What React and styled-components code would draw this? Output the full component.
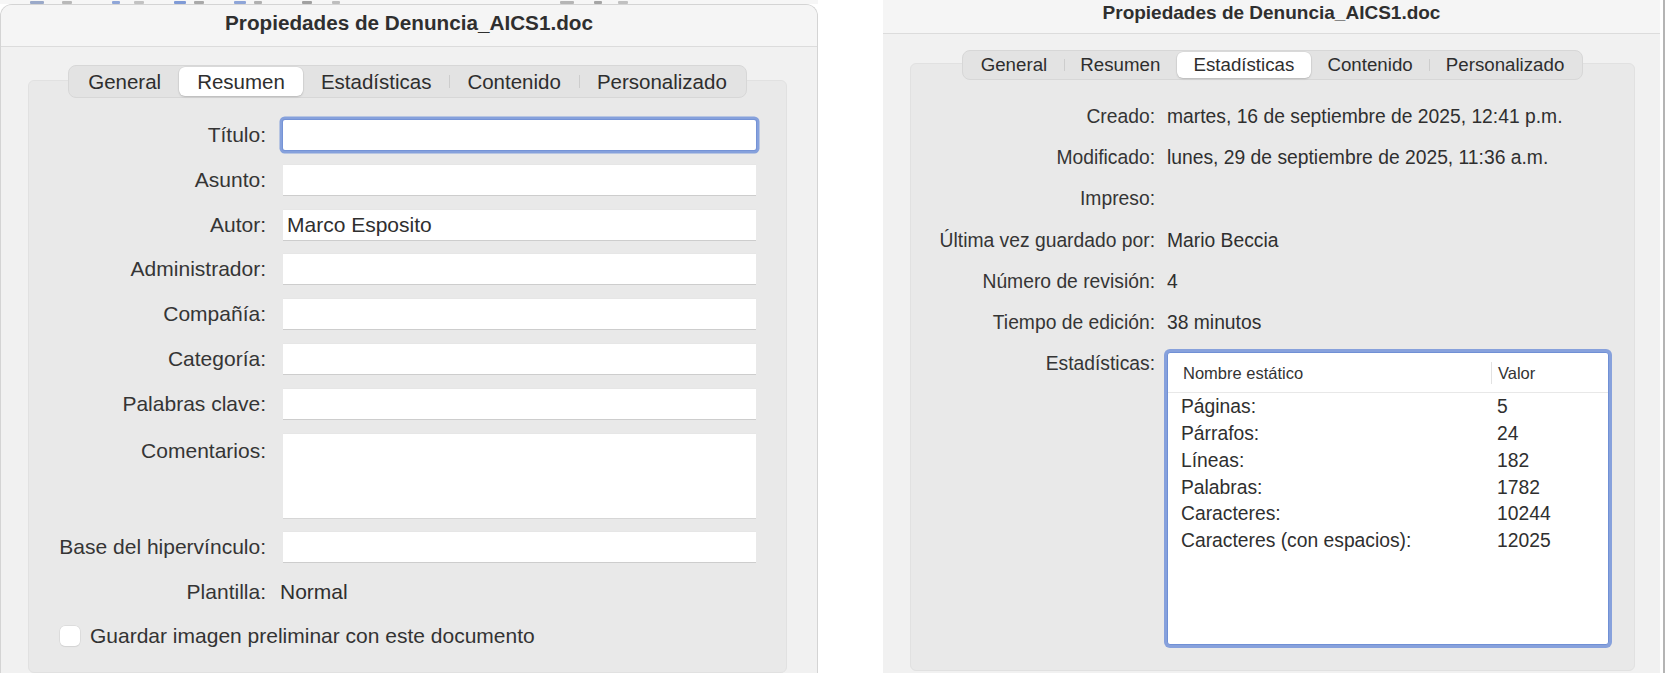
import React from "react";
import styled, { createGlobalStyle } from "styled-components";

const GlobalStyle = createGlobalStyle`
  *, *::before, *::after {
    box-sizing: border-box;
  }
  html, body {
    margin: 0;
    padding: 0;
    background: #ffffff;
  }
  body {
    font-family: "Liberation Sans", Arial, sans-serif;
    color: #333333;
  }
`;

const Screen = styled.div`
  width: 1668px;
  height: 673px;
  overflow: hidden;
  display: flex;
  align-items: stretch;
`;

const LeftColumn = styled.div`
  width: 818px;
  flex-shrink: 0;
  display: flex;
  flex-direction: column;
`;

/* the toolbar of the document window that peeks out above the dialog */
const ToolbarPeek = styled.div`
  height: 4px;
  flex-shrink: 0;
  display: flex;
  align-items: flex-end;
  background: #f6f6f6;
  overflow: hidden;
`;

const PeekMark = styled.span`
  width: ${(p) => p.$w}px;
  height: 3px;
  margin-left: ${(p) => p.$ml}px;
  border-radius: 1px;
  background: ${(p) => p.$color};
`;

const Window = styled.div`
  flex: 1;
  display: flex;
  flex-direction: column;
  background: #f1f1f1;
  border: ${(p) => (p.$bordered ? "1px solid #d4d4d4" : "none")};
  border-bottom: none;
  border-radius: ${(p) => p.$radius || "0"};
  overflow: hidden;
`;

const RightWindow = styled(Window)`
  flex: 0 0 777px;
  margin-left: 65px;
`;

const EdgePeek = styled.div`
  width: 2px;
  margin-left: 3px;
  background: #b4b4b4;
`;

const TitleBar = styled.div`
  height: ${(p) => p.$h}px;
  flex-shrink: 0;
  display: flex;
  align-items: center;
  justify-content: center;
  padding-bottom: ${(p) => p.$pb}px;
  background: #f5f5f5;
  border-bottom: 1px solid #dcdcdc;
  font-size: ${(p) => p.$fs}px;
  font-weight: bold;
  color: #2f2f2f;
`;

const WindowBody = styled.div`
  flex: 1;
  display: flex;
  flex-direction: column;
  padding: ${(p) => p.$pad};
`;

const TabBar = styled.div`
  align-self: center;
  position: relative;
  z-index: 1;
  display: flex;
  height: ${(p) => p.$h}px;
  padding: 1px;
  background: #e3e3e3;
  border: 1px solid #d7d7d7;
  border-radius: 8px;
`;

const Tab = styled.div`
  position: relative;
  display: flex;
  align-items: center;
  padding: 0 ${(p) => p.$px}px;
  font-size: ${(p) => p.$fs}px;
  color: #2e2e2e;
  white-space: nowrap;
  border-radius: 6px;
  background: ${(p) => (p.$active ? "#ffffff" : "transparent")};
  box-shadow: ${(p) =>
    p.$active ? "0 1px 2px rgba(0,0,0,0.16), 0 0 0 0.5px rgba(0,0,0,0.07)" : "none"};

  &::before {
    content: "";
    display: ${(p) => (p.$sep ? "block" : "none")};
    position: absolute;
    left: 0;
    top: 28%;
    bottom: 28%;
    width: 1px;
    background: #cdcdcd;
  }
`;

const Panel = styled.div`
  flex: 1;
  margin-top: -${(p) => p.$overlap}px;
  padding: ${(p) => p.$pad};
  background: #e9e9e9;
  border: 1px solid #e1e1e1;
  border-radius: 6px;
`;

/* ---- Resumen tab ---- */

const SummaryForm = styled.div`
  display: grid;
  grid-template-columns: 237px 473px;
  column-gap: 17px;
  row-gap: 14.8px;
  font-size: 21px;
`;

const FieldLabel = styled.div`
  align-self: start;
  text-align: right;
  white-space: nowrap;
  line-height: ${(p) => p.$lh || 30}px;
  padding-top: ${(p) => p.$pt || 0}px;
  color: #353535;
`;

const TextField = styled.input`
  display: block;
  width: 100%;
  height: 30px;
  margin: 0;
  padding: 0 4px;
  border: none;
  outline: none;
  border-radius: ${(p) => (p.$focused ? "2px" : "0")};
  background: #ffffff;
  font-family: inherit;
  font-size: 21px;
  color: #2f2f2f;
  box-shadow: ${(p) =>
    p.$focused
      ? "0 0 0 1px #7593d6, 0 0 0 3.5px #86a1dc"
      : "0 1px 0 #cdcdcd, 0 -0.5px 0 #e4e4e4"};
`;

const TextArea = styled.textarea`
  display: block;
  width: 100%;
  height: 84px;
  margin: 0;
  padding: 4px;
  border: none;
  outline: none;
  resize: none;
  background: #ffffff;
  font-family: inherit;
  font-size: 21px;
  box-shadow: 0 1px 0 #d6d6d6, 0 -0.5px 0 #e4e4e4;
`;

const PlainValue = styled.div`
  line-height: 30px;
  color: #2f2f2f;
  margin-left: -3px;
`;

const CheckRow = styled.label`
  grid-column: 1 / -1;
  display: flex;
  align-items: center;
  gap: 10px;
  height: 30px;
  padding-left: 31px;
  margin-top: -1px;
  color: #333333;
`;

const CheckBox = styled.span`
  width: 20px;
  height: 20px;
  border-radius: 5px;
  background: #ffffff;
  box-shadow: 0 0 0 0.5px #d2d2d2, 0 1px 1px rgba(0, 0, 0, 0.08);
`;

/* ---- Estadísticas tab ---- */

const StatsForm = styled.div`
  display: grid;
  grid-template-columns: 244px 1fr;
  column-gap: 12px;
  row-gap: 17.2px;
  font-size: 19.3px;
  line-height: 24px;
`;

const StatLabel = styled.div`
  text-align: right;
  white-space: nowrap;
  color: #353535;
`;

const StatValue = styled.div`
  white-space: nowrap;
  color: #2f2f2f;
  min-height: 24px;
`;

const StatsTable = styled.div`
  width: 442px;
  height: 293px;
  display: flex;
  flex-direction: column;
  background: #ffffff;
  border: 1px solid #7090d5;
  border-radius: 3px;
  box-shadow: 0 0 0 3px #87a1dc;
`;

const TableHead = styled.div`
  display: grid;
  grid-template-columns: 308px 1fr 4px;
  align-items: center;
  height: 40px;
  flex-shrink: 0;
  padding-left: 15px;
  border-bottom: 1px solid #e8e8e8;
  font-size: 16.5px;
  color: #333333;
`;

const HeadCell = styled.div`
  line-height: 22px;
  padding-left: ${(p) => (p.$divider ? "6px" : "0")};
  border-left: ${(p) => (p.$divider ? "1px solid #e2e2e2" : "none")};
`;

const TableRows = styled.div`
  padding-top: 1px;
`;

const TableRow = styled.div`
  display: grid;
  grid-template-columns: 316px 1fr;
  padding-left: 13px;
  font-size: 19.3px;
  line-height: 26.8px;
  color: #2f2f2f;
`;

const TAB_NAMES = ["General", "Resumen", "Estadísticas", "Contenido", "Personalizado"];

const Tabs = ({ active, h, fs, px }) => {
  const activeIndex = TAB_NAMES.indexOf(active);
  return (
    <TabBar $h={h}>
      {TAB_NAMES.map((name, i) => (
        <Tab
          key={name}
          $fs={fs}
          $px={px}
          $active={i === activeIndex}
          $sep={i > 0 && i !== activeIndex && i - 1 !== activeIndex}
        >
          {name}
        </Tab>
      ))}
    </TabBar>
  );
};

const summaryFields = [
  { label: "Título:", value: "", focused: true },
  { label: "Asunto:", value: "" },
  { label: "Autor:", value: "Marco Esposito" },
  { label: "Administrador:", value: "" },
  { label: "Compañía:", value: "" },
  { label: "Categoría:", value: "" },
  { label: "Palabras clave:", value: "" },
];

const statsInfo = [
  { label: "Creado:", value: "martes, 16 de septiembre de 2025, 12:41 p.m." },
  { label: "Modificado:", value: "lunes, 29 de septiembre de 2025, 11:36 a.m." },
  { label: "Impreso:", value: "" },
  { label: "Última vez guardado por:", value: "Mario Beccia" },
  { label: "Número de revisión:", value: "4" },
  { label: "Tiempo de edición:", value: "38 minutos" },
];

const statsRows = [
  ["Páginas:", "5"],
  ["Párrafos:", "24"],
  ["Líneas:", "182"],
  ["Palabras:", "1782"],
  ["Caracteres:", "10244"],
  ["Caracteres (con espacios):", "12025"],
];

const peekMarks = [
  [14, 30, "#9aa9c9"], [10, 18, "#b8b8b8"], [8, 40, "#8fa6d8"], [10, 14, "#c2c2c2"],
  [12, 30, "#7f9ad6"], [10, 8, "#a9a9a9"], [12, 30, "#8ea5d8"], [8, 8, "#b0b0b0"],
  [10, 40, "#a0a0a0"], [8, 20, "#bdbdbd"], [14, 220, "#b5b5b5"], [8, 20, "#a5a5a5"],
  [10, 16, "#c0c0c0"],
];

const SummaryWindow = () => (
  <LeftColumn>
    <ToolbarPeek>
      {peekMarks.map(([w, ml, color], i) => (
        <PeekMark key={i} $w={w} $ml={ml} $color={color} />
      ))}
    </ToolbarPeek>
    <Window $bordered $radius="12px 12px 0 0">
      <TitleBar $h={42} $pb={5} $fs={20.7}>
        Propiedades de Denuncia_AICS1.doc
      </TitleBar>
      <WindowBody $pad="18px 30px 0 27px">
        <Tabs active="Resumen" h={33} fs={20.5} px={18} />
        <Panel $overlap={18} $pad="39px 0 0 0">
          <SummaryForm>
            {summaryFields.map((f) => (
              <React.Fragment key={f.label}>
                <FieldLabel>{f.label}</FieldLabel>
                <TextField defaultValue={f.value} readOnly $focused={f.focused} />
              </React.Fragment>
            ))}
            <FieldLabel $pt={2}>Comentarios:</FieldLabel>
            <TextArea defaultValue="" readOnly />
            <FieldLabel>Base del hipervínculo:</FieldLabel>
            <TextField defaultValue="" readOnly />
            <FieldLabel>Plantilla:</FieldLabel>
            <PlainValue>Normal</PlainValue>
            <CheckRow>
              <CheckBox />
              Guardar imagen preliminar con este documento
            </CheckRow>
          </SummaryForm>
        </Panel>
      </WindowBody>
    </Window>
  </LeftColumn>
);

const StatisticsWindow = () => (
  <RightWindow>
    <TitleBar $h={34} $pb={7} $fs={19}>
      Propiedades de Denuncia_AICS1.doc
    </TitleBar>
    <WindowBody $pad="16px 25px 2px 27px">
      <Tabs active="Estadísticas" h={30} fs={18.7} px={16.6} />
      <Panel $overlap={17} $pad="41px 0 0 0">
        <StatsForm>
          {statsInfo.map((s) => (
            <React.Fragment key={s.label}>
              <StatLabel>{s.label}</StatLabel>
              <StatValue>{s.value}</StatValue>
            </React.Fragment>
          ))}
          <StatLabel>Estadísticas:</StatLabel>
          <StatsTable>
            <TableHead>
              <HeadCell>Nombre estático</HeadCell>
              <HeadCell $divider>Valor</HeadCell>
              <HeadCell $divider />
            </TableHead>
            <TableRows>
              {statsRows.map(([name, value]) => (
                <TableRow key={name}>
                  <span>{name}</span>
                  <span>{value}</span>
                </TableRow>
              ))}
            </TableRows>
          </StatsTable>
        </StatsForm>
      </Panel>
    </WindowBody>
  </RightWindow>
);

const App = () => (
  <>
    <GlobalStyle />
    <Screen>
      <SummaryWindow />
      <StatisticsWindow />
      <EdgePeek />
    </Screen>
  </>
);

export default App;
